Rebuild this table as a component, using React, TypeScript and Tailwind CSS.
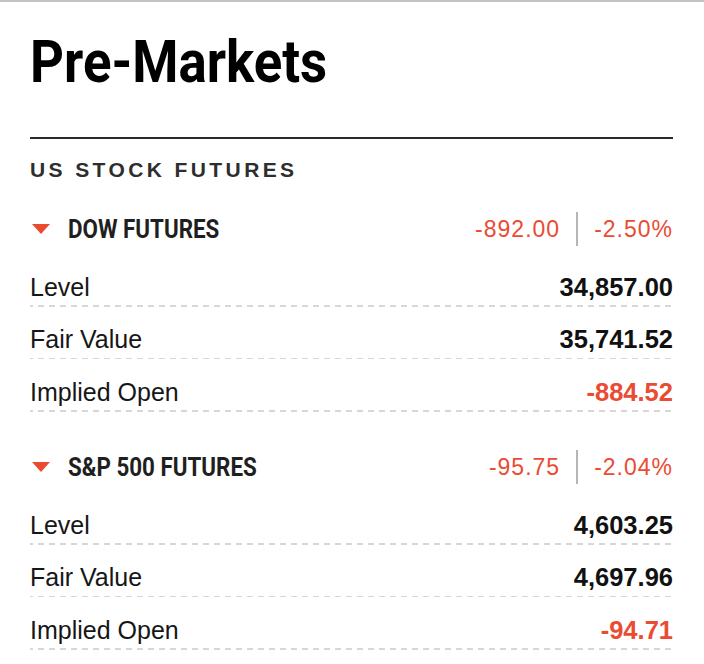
const grot = "font-['Roboto','Liberation_Sans',sans-serif]";
const sans = "font-['Liberation_Sans','Helvetica',Arial,sans-serif]";

type Row = { label: string; value: string; negative?: boolean };

type Future = {
  name: string;
  change: string;
  percent: string;
  rows: Row[];
};

const futures: Future[] = [
  {
    name: "DOW FUTURES",
    change: "-892.00",
    percent: "-2.50%",
    rows: [
      { label: "Level", value: "34,857.00" },
      { label: "Fair Value", value: "35,741.52" },
      { label: "Implied Open", value: "-884.52", negative: true },
    ],
  },
  {
    name: "S&P 500 FUTURES",
    change: "-95.75",
    percent: "-2.04%",
    rows: [
      { label: "Level", value: "4,603.25" },
      { label: "Fair Value", value: "4,697.96" },
      { label: "Implied Open", value: "-94.71", negative: true },
    ],
  },
];

function DownArrow() {
  return (
    <svg width="18" height="10" viewBox="0 0 18 10" className="shrink-0">
      <path d="M0 0 H18 L9 10 Z" fill="#ea4a2f" />
    </svg>
  );
}

function FutureBlock({ future, first }: { future: Future; first?: boolean }) {
  return (
    <div className={first ? "mt-[24px]" : "mt-[30.5px]"}>
      <div className="flex h-[50px] items-center justify-between">
        <div className="flex items-center gap-[18px] pl-[2px]">
          <DownArrow />
          <span
            className={`${grot} origin-left scale-x-[0.86] text-[26px] leading-none font-bold text-[#1f1f1f]`}
          >
            {future.name}
          </span>
        </div>
        <div className={`${sans} flex items-center text-[23px] leading-none text-[#ea4b33] tracking-[1px]`}>
          <span>{future.change}</span>
          <span className="mx-[16px] h-[34px] w-[2px] bg-[#b5b5b5]" />
          <span>{future.percent}</span>
        </div>
      </div>
      {future.rows.map((row) => (
        <div
          key={row.label}
          className="flex h-[52.5px] items-end justify-between bg-[linear-gradient(to_right,#d7d7d7_6px,transparent_6px)] bg-[length:11px_1.5px] bg-bottom bg-repeat-x pb-[6px]"
        >
          <span className={`${sans} text-[25px] leading-[28px] text-[#161616]`}>
            {row.label}
          </span>
          <span
            className={`${sans} text-[25.5px] leading-[28px] font-bold ${
              row.negative ? "text-[#ea4b33]" : "text-[#111111]"
            }`}
          >
            {row.value}
          </span>
        </div>
      ))}
    </div>
  );
}

export default function App() {
  return (
    <div className="min-h-[664px] w-[704px] bg-white">
      <div className="h-[2px] bg-[#c4c4c4]" />
      <div className="pl-[30px] pr-[31px]">
        <h1
          className={`${grot} mt-[30px] origin-left scale-x-[0.895] text-[59px] leading-none font-bold text-black`}
        >
          Pre-Markets
        </h1>
        <div className="mt-[46px] h-[2px] bg-[#2a2a2a]" />
        <h2
          className={`${sans} mt-[20px] text-[21px] leading-none font-bold tracking-[3.4px] text-[#2e2e2e]`}
        >
          US STOCK FUTURES
        </h2>
        {futures.map((future, i) => (
          <FutureBlock key={future.name} future={future} first={i === 0} />
        ))}
      </div>
    </div>
  );
}
